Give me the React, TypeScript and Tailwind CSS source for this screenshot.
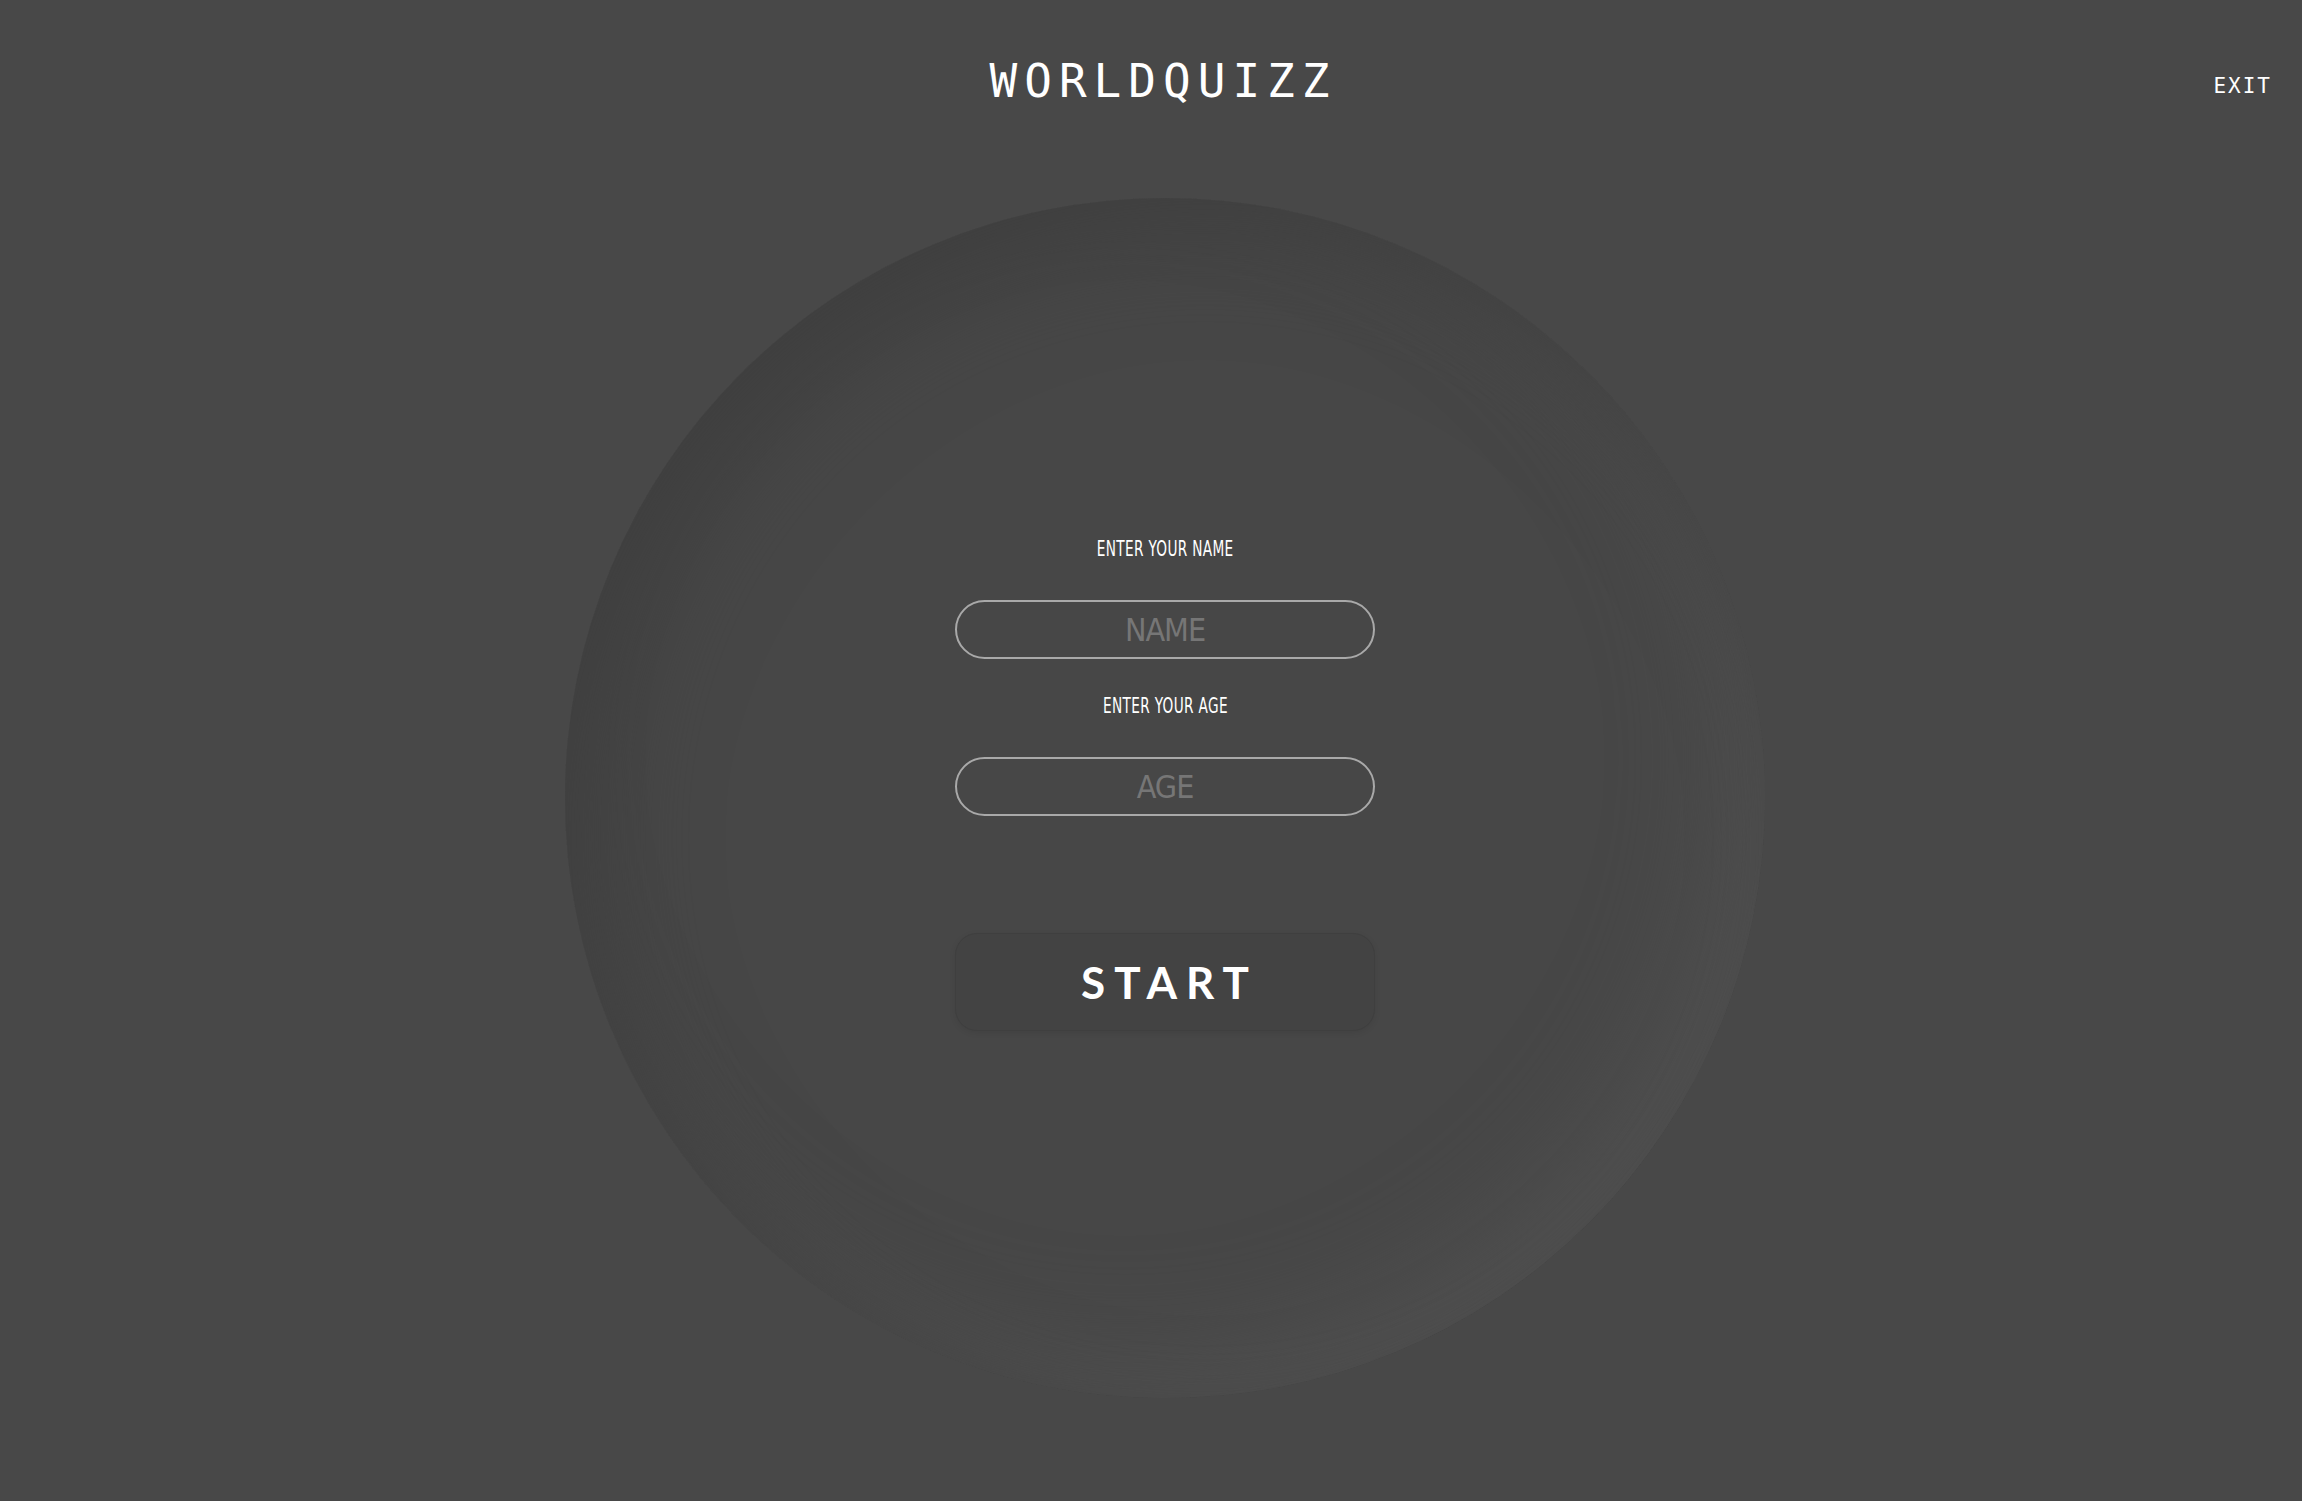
import React from 'react';

const condensed = 'font-stretch-condensed font-[DejaVu_Sans_Condensed,DejaVu_Sans,sans-serif]';

function FieldLabel({ children, className = '' }: { children: React.ReactNode; className?: string }) {
  return (
    <label
      className={`inline-block origin-center scale-x-[0.69] text-[22px] leading-none tracking-[0.5px] text-white ${condensed} ${className}`}
    >
      {children}
    </label>
  );
}

export default function App() {
  return (
    <div className="relative min-h-[1501px] w-full overflow-hidden bg-[#484848] text-white">
      {/* Header */}
      <header className="relative flex h-[150px] items-start justify-center pt-[58px]">
        <h1 className="pl-[24px] text-[46px] leading-none tracking-[7px] text-white font-[DejaVu_Sans_Mono,monospace]">
          WORLDQUIZZ
        </h1>
        <button className="absolute right-[30px] top-[76px] text-[21px] leading-none tracking-[2px] text-white font-[DejaVu_Sans_Mono,monospace]">
          EXIT
        </button>
      </header>

      {/* Main */}
      <main className="flex justify-center pl-[28px] pt-[48px]">
        <div className="flex h-[1200px] w-[1200px] flex-col items-center rounded-full bg-[#474747] pt-[340px] shadow-[inset_40px_40px_100px_#3f3f3f,inset_-40px_-40px_100px_#515151]">
          <FieldLabel>ENTER YOUR NAME</FieldLabel>
          <input
            placeholder="NAME"
            className={`mt-[40px] h-[59px] w-[420px] rounded-full border-2 border-[#a9a9a9] bg-transparent text-center text-[32px] tracking-[-1px] text-white outline-none placeholder:text-[#767676] ${condensed}`}
          />
          <FieldLabel className="mt-[36px]">ENTER YOUR AGE</FieldLabel>
          <input
            placeholder="AGE"
            className={`mt-[40px] h-[59px] w-[420px] rounded-full border-2 border-[#a9a9a9] bg-transparent text-center text-[32px] tracking-[-1px] text-white outline-none placeholder:text-[#767676] ${condensed}`}
          />
          <button className="mt-[117px] flex h-[98px] w-[420px] items-center justify-center rounded-[22px] border border-[#3f3f3f] bg-[#434343] pl-[9px] text-[44px] font-bold leading-none tracking-[9px] text-white shadow-[0_2px_6px_rgba(0,0,0,0.08)] font-[Lato,Open_Sans,sans-serif]">
            START
          </button>
        </div>
      </main>
    </div>
  );
}
